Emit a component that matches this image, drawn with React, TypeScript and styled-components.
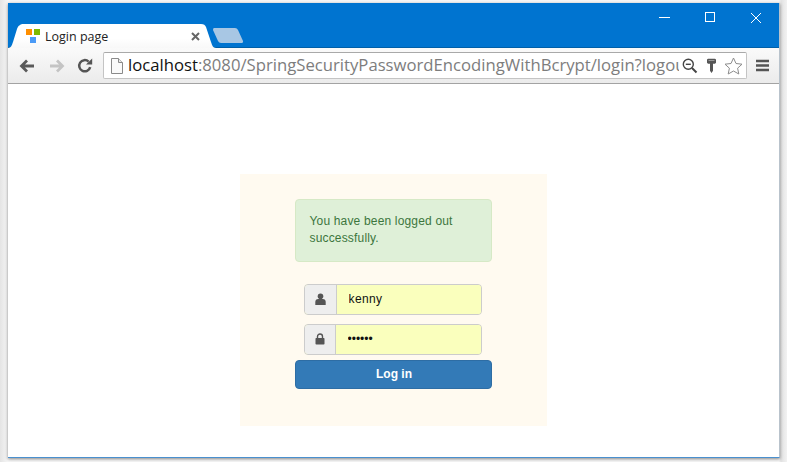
import React from 'react';
import styled, { createGlobalStyle } from 'styled-components';

const GlobalStyle = createGlobalStyle`
  html, body {
    margin: 0;
    padding: 0;
    background: #f4f4f4;
  }
  body {
    width: 787px;
    height: 462px;
    overflow: hidden;
  }
`;

const Desktop = styled.div`
  width: 787px;
  height: 462px;
  box-sizing: border-box;
  padding: 3px 7px 4px 8px;
  background: linear-gradient(90deg, #e4e4e4 0, #f6f6f6 8px, #f6f6f6 779px, #e2e2e2 781px, #f2f2f2 787px);
`;

const Window = styled.div`
  width: 772px;
  height: 455px;
  box-sizing: border-box;
  display: flex;
  flex-direction: column;
  background: #fff;
  border-right: 1px solid #b9c3cc;
  border-bottom: 1px solid #4a90cf;
  box-shadow: 0 1px 3px rgba(0, 0, 0, 0.45);
`;

const TitleBar = styled.div`
  height: 45px;
  flex: none;
  display: flex;
  align-items: flex-end;
  justify-content: space-between;
  background: #0074d0;
  border-bottom: 1px solid #005fa8;
  box-sizing: border-box;
`;

const TabStrip = styled.div`
  display: flex;
  align-items: flex-end;
  height: 24px;
  margin-bottom: -1px;
`;

const Tab = styled.div`
  position: relative;
  width: 208px;
  height: 24px;
  display: flex;
  align-items: center;
  font: 12.5px 'Open Sans', 'Noto Sans', sans-serif;
  color: #222;
  padding: 0 0 0 18px;
  box-sizing: border-box;
`;

const TabShape = styled.svg`
  position: absolute;
  left: 0;
  top: 0;
`;

const Favicon = styled.svg`
  position: relative;
`;

const TabLabel = styled.span`
  position: relative;
  margin-left: 5px;
  flex: 1;
  padding-top: 1px;
`;

const TabClose = styled.svg`
  position: relative;
  margin-right: 16px;
  margin-top: 1px;
`;

const NewTab = styled.svg`
  margin: 0 0 5px -3px;
`;

const WindowControls = styled.div`
  display: flex;
  align-self: flex-start;
  color: #fff;
`;

const ControlButton = styled.div`
  width: 46px;
  height: 29px;
  display: flex;
  align-items: center;
  justify-content: center;
`;

const Toolbar = styled.div`
  height: 36px;
  flex: none;
  box-sizing: border-box;
  display: flex;
  align-items: center;
  padding: 0 10px 0 11px;
  background: linear-gradient(#fafafa, #f1f1f1 60%, #ebebeb);
  border-bottom: 1px solid #a3a3a3;
`;

const NavButtons = styled.div`
  display: flex;
  align-items: center;
  gap: 12px;
  margin-right: 10px;
`;

const AddressBar = styled.div`
  flex: 1;
  height: 27px;
  min-width: 0;
  box-sizing: border-box;
  display: flex;
  align-items: center;
  padding: 0 3px 0 7px;
  background: #fff;
  border: 1px solid #c4c4c4;
  border-top-color: #a9a9a9;
  border-radius: 2px;
  margin-right: 9px;
`;

const UrlClip = styled.div`
  flex: 1;
  min-width: 0;
  overflow: hidden;
  white-space: nowrap;
  margin-left: 5px;
  padding-bottom: 2px;
  font: 16.7px 'Open Sans', 'Noto Sans', sans-serif;
  line-height: 23px;
  color: #7d7d7d;
`;

const UrlHost = styled.span`
  color: #111;
`;

const AddressIcons = styled.div`
  display: flex;
  align-items: center;
  margin-left: 3px;
`;

const ZoomSlot = styled.span`
  display: flex;
  margin-right: 8px;
`;

const KeySlot = styled.span`
  display: flex;
  margin-right: 7px;
`;

const Page = styled.main`
  flex: 1;
  display: flex;
  justify-content: center;
  align-items: flex-start;
  padding: 90px 0 0 0;
  background: #fff;
  font-family: 'Liberation Sans', Arial, sans-serif;
`;

const LoginPanel = styled.section`
  width: 307px;
  height: 252px;
  margin-right: 1px;
  box-sizing: border-box;
  padding: 25px 55px 0;
  background: #fffaf0;
`;

const Alert = styled.div`
  height: 63px;
  box-sizing: border-box;
  padding: 13px 14px;
  font-size: 12px;
  line-height: 17px;
  letter-spacing: 0.17px;
  color: #3c763d;
  background: #dff0d8;
  border: 1px solid #d6e9c6;
  border-radius: 4px;
`;

const LoginForm = styled.form`
  margin-top: 22px;
  display: flex;
  flex-direction: column;
`;

const InputGroup = styled.div`
  display: flex;
  height: 31px;
  margin: 0 10px 9px 9px;
  box-sizing: border-box;
  border: 1px solid #ccc;
  border-radius: 4px;
  overflow: hidden;
  background: #faffbd;
  &:nth-of-type(2) {
    margin-bottom: 5px;
  }
`;

const Addon = styled.span<{ $wide?: boolean }>`
  width: ${(p) => (p.$wide ? 31 : 30)}px;
  flex: none;
  display: flex;
  align-items: center;
  justify-content: center;
  padding-bottom: 2px;
  box-sizing: content-box;
  height: 27px;
  background: #eee;
  border-right: 1px solid #ccc;
  color: #555;
`;

const Field = styled.input`
  flex: 1;
  min-width: 0;
  border: 0;
  outline: 0;
  padding: 0 11px 2px 12px;
  background: #faffbd;
  font: 12px 'Liberation Sans', Arial, sans-serif;
  letter-spacing: 0.4px;
  color: #111;
  &[type='password'] {
    letter-spacing: 0;
  }
`;

const SubmitButton = styled.button`
  height: 29px;
  padding: 0 0 2px 2px;
  color: #fff;
  font: bold 12px 'Liberation Sans', Arial, sans-serif;
  background: #337ab7;
  border: 1px solid #2e6da4;
  border-radius: 4px;
`;

const BackIcon = ({ color }: { color: string }) => (
  <svg width="17" height="14" viewBox="0 0 17 14">
    <path d="M8 1.500 2.500 7 8 12.500M3 7h12" fill="none" stroke={color} strokeWidth="2.800" />
  </svg>
);

const ForwardIcon = ({ color }: { color: string }) => (
  <svg width="17" height="14" viewBox="0 0 17 14">
    <path d="M9 1.500 14.500 7 9 12.500M14 7H2" fill="none" stroke={color} strokeWidth="2.800" />
  </svg>
);

const ReloadIcon = () => (
  <svg width="16" height="16" viewBox="0 0 16 16">
    <path d="M13.200 9.200A5.600 5.600 0 1 1 11.600 3.600" fill="none" stroke="#555" strokeWidth="2.500" />
    <path d="M9 6.600h6.200V.6z" fill="#555" />
  </svg>
);

const PageIcon = () => (
  <svg width="12" height="16" viewBox="0 0 12 16">
    <path d="M.5.5h7l4 4v11H.5z" fill="#fafafa" stroke="#8a8a8a" />
    <path d="M7.500.5v4h4" fill="#e8e8e8" stroke="#8a8a8a" />
  </svg>
);

const ZoomOutIcon = () => (
  <svg width="16" height="16" viewBox="0 0 16 16">
    <circle cx="6.300" cy="6.300" r="5" fill="none" stroke="#444" strokeWidth="1.400" />
    <path d="M3.800 6.300h5" stroke="#444" strokeWidth="1.400" />
    <path d="m10 10 4.500 4.500" stroke="#444" strokeWidth="2" />
  </svg>
);

const KeyIcon = () => (
  <svg width="11" height="16" viewBox="0 0 11 16">
    <path d="M1 1.500 2 .8h7l1 .7v3.200L9 5.800H7v7L5.500 15 4 12.800V5.800H2L1 4.700z" fill="#555" />
    <path d="M2.500 2.500h6" stroke="#999" />
  </svg>
);

const StarIcon = () => (
  <svg width="19" height="18" viewBox="0 0 19 18">
    <path
      d="m9.500 1 2.500 5.500 6 .7-4.400 4 1.200 5.800-5.300-3-5.300 3 1.200-5.800-4.400-4 6-.7z"
      fill="#fff"
      stroke="#8c8c8c"
    />
  </svg>
);

const MenuIcon = () => (
  <svg width="13" height="13" viewBox="0 0 13 13">
    <path d="M0 2h13M0 6.500h13M0 11h13" stroke="#555" strokeWidth="2.300" />
  </svg>
);

const UserIcon = () => (
  <svg width="11" height="12" viewBox="0 0 11 12">
    <circle cx="5.500" cy="3.300" r="2.800" fill="#555" />
    <path d="M.3 12V9q0-3 3-3h4.400q3 0 3 3v3z" fill="#555" />
  </svg>
);

const LockIcon = () => (
  <svg width="10" height="12" viewBox="0 0 10 12">
    <path d="M2.500 5.500V3.500a2.500 2.500 0 0 1 5 0v2" fill="none" stroke="#555" strokeWidth="1.400" />
    <rect x=".5" y="5" width="9" height="6.500" rx=".8" fill="#555" />
  </svg>
);

export default function App() {
  return (
    <Desktop>
      <GlobalStyle />
      <Window>
        <TitleBar>
          <TabStrip>
            <Tab>
              <TabShape width="208" height="24" viewBox="0 0 208 24">
                <path
                  d="M0 24C3 24 4 21 5 18L9 5C10 2 12 0 16 0H193C196 0 197 1 198 3L203 18C204 21 205 24 208 24Z"
                  fill="url(#tabFill)"
                />
                <defs>
                  <linearGradient id="tabFill" x1="0" y1="0" x2="0" y2="1">
                    <stop offset="0" stopColor="#ffffff" />
                    <stop offset="0.6" stopColor="#ffffff" />
                    <stop offset="1" stopColor="#f8f8f8" />
                  </linearGradient>
                </defs>
              </TabShape>
              <Favicon width="14" height="15" viewBox="0 0 14 15">
                <rect x="0" y="0" width="6" height="6" fill="#ff8f00" />
                <rect x="8" y="0" width="6" height="6" fill="#7fba00" />
                <rect x="4" y="8" width="6" height="6" fill="#4b9bf7" />
              </Favicon>
              <TabLabel>Login page</TabLabel>
              <TabClose width="9" height="9" viewBox="0 0 9 9">
                <path d="m1 1 7 7M8 1 1 8" stroke="#666" strokeWidth="2" />
              </TabClose>
            </Tab>
            <NewTab width="32" height="15" viewBox="0 0 32 15">
              <path
                d="M1 0H22Q24 0 25 2L30 13Q30.500 15 28 15H8Q6 15 5 13L0 2Q0 0 1 0Z"
                fill="#a8c7e4"
              />
            </NewTab>
          </TabStrip>
          <WindowControls>
            <ControlButton>
              <svg width="11" height="11" viewBox="0 0 11 11">
                <path d="M0 5.500h11" stroke="#fff" />
              </svg>
            </ControlButton>
            <ControlButton>
              <svg width="11" height="11" viewBox="0 0 11 11">
                <rect x=".5" y=".5" width="9" height="9" fill="none" stroke="#fff" />
              </svg>
            </ControlButton>
            <ControlButton>
              <svg width="12" height="12" viewBox="0 0 12 12">
                <path d="m1 1 10 10M11 1 1 11" stroke="#fff" />
              </svg>
            </ControlButton>
          </WindowControls>
        </TitleBar>
        <Toolbar>
          <NavButtons>
            <BackIcon color="#5a5a5a" />
            <ForwardIcon color="#c4c4c4" />
            <ReloadIcon />
          </NavButtons>
          <AddressBar>
            <PageIcon />
            <UrlClip>
              <UrlHost>localhost</UrlHost>:8080/SpringSecurityPasswordEncodingWithBcrypt/login?logout
            </UrlClip>
            <AddressIcons>
              <ZoomSlot>
                <ZoomOutIcon />
              </ZoomSlot>
              <KeySlot>
                <KeyIcon />
              </KeySlot>
              <StarIcon />
            </AddressIcons>
          </AddressBar>
          <MenuIcon />
        </Toolbar>
        <Page>
          <LoginPanel>
            <Alert>You have been logged out successfully.</Alert>
            <LoginForm onSubmit={(e) => e.preventDefault()}>
              <InputGroup>
                <Addon $wide>
                  <UserIcon />
                </Addon>
                <Field type="text" defaultValue="kenny" />
              </InputGroup>
              <InputGroup>
                <Addon>
                  <LockIcon />
                </Addon>
                <Field type="password" defaultValue="secret" />
              </InputGroup>
              <SubmitButton type="submit">Log in</SubmitButton>
            </LoginForm>
          </LoginPanel>
        </Page>
      </Window>
    </Desktop>
  );
}
